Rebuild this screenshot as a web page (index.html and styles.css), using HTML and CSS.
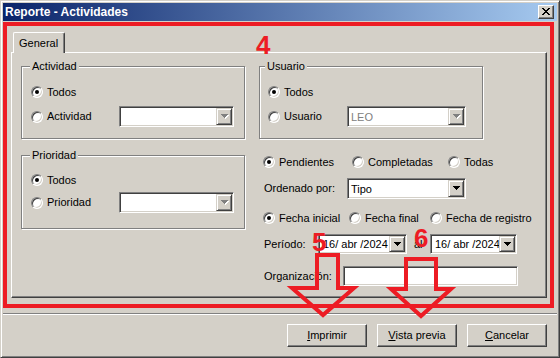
FILE: index.html
```html
<!DOCTYPE html>
<html>
<head>
<meta charset="utf-8">
<title>Reporte - Actividades</title>
<link rel="stylesheet" href="styles.css">
</head>
<body>
<div class="window">
  <div class="titlebar">
    <span class="title">Reporte - Actividades</span>
    <span class="close"><svg width="8" height="7" viewBox="0 0 8 7" shape-rendering="crispEdges"><path d="M0 0h2v1H0z M6 0h2v1H6z M1 1h2v1H1z M5 1h2v1H5z M2 2h4v1H2z M3 3h2v1H3z M2 4h4v1H2z M1 5h2v1H1z M5 5h2v1H5z M0 6h2v1H0z M6 6h2v1H6z" fill="#000"/></svg></span>
  </div>
  <div class="main">
    <div class="tabstrip"><div class="tab">General</div></div>
    <div class="panel">
      <div class="col-left">
        <div class="group">
          <div class="legend">Actividad</div>
          <div class="row r1 pl9"><label class="opt w88"><span class="radio on"></span>Todos</label></div>
          <div class="row r2 pl9"><label class="opt w88"><span class="radio"></span>Actividad</label>
            <div class="combo disabled w115"><span class="val"></span><span class="drop"><svg width="8" height="5" viewBox="0 0 8 5" shape-rendering="crispEdges"><path class="sh" d="M1 1h7v1h-1v1h-1v1h-1v1h-1v-1h-1v-1h-1v-1H1z"/><path class="ar" d="M0 0h7v1h-1v1h-1v1h-1v1h-1v-1h-1v-1h-1v-1H0z"/></svg></span></div>
          </div>
        </div>
        <div class="group g-prio">
          <div class="legend">Prioridad</div>
          <div class="row p1 pl9"><label class="opt w88"><span class="radio on"></span>Todos</label></div>
          <div class="row p2 pl9"><label class="opt w88"><span class="radio"></span>Prioridad</label>
            <div class="combo disabled w115"><span class="val"></span><span class="drop"><svg width="8" height="5" viewBox="0 0 8 5" shape-rendering="crispEdges"><path class="sh" d="M1 1h7v1h-1v1h-1v1h-1v1h-1v-1h-1v-1h-1v-1H1z"/><path class="ar" d="M0 0h7v1h-1v1h-1v1h-1v1h-1v-1h-1v-1h-1v-1H0z"/></svg></span></div>
          </div>
        </div>
      </div>
      <div class="col-right">
        <div class="group g-user">
          <div class="legend lg5">Usuario</div>
          <div class="row r1 pl8"><label class="opt w79"><span class="radio on"></span>Todos</label></div>
          <div class="row r2 pl8"><label class="opt w79"><span class="radio"></span>Usuario</label>
            <div class="combo disabled w119"><span class="val grey">LEO</span><span class="drop"><svg width="8" height="5" viewBox="0 0 8 5" shape-rendering="crispEdges"><path class="sh" d="M1 1h7v1h-1v1h-1v1h-1v1h-1v-1h-1v-1h-1v-1H1z"/><path class="ar" d="M0 0h7v1h-1v1h-1v1h-1v1h-1v-1h-1v-1h-1v-1H0z"/></svg></span></div>
          </div>
        </div>
        <div class="rrow s-status">
          <label class="opt w89"><span class="radio on"></span>Pendientes</label>
          <label class="opt w96"><span class="radio"></span>Completadas</label>
          <label class="opt"><span class="radio"></span>Todas</label>
        </div>
        <div class="rrow s-order">
          <span class="lbl w84">Ordenado por:</span>
          <div class="combo w119"><span class="val">Tipo</span><span class="drop"><svg width="8" height="5" viewBox="0 0 8 5" shape-rendering="crispEdges"><path class="sh" d="M1 1h7v1h-1v1h-1v1h-1v1h-1v-1h-1v-1h-1v-1H1z"/><path class="ar" d="M0 0h7v1h-1v1h-1v1h-1v1h-1v-1h-1v-1h-1v-1H0z"/></svg></span></div>
        </div>
        <div class="rrow s-fecha">
          <label class="opt w86"><span class="radio on"></span>Fecha inicial</label>
          <label class="opt w81"><span class="radio"></span>Fecha final</label>
          <label class="opt"><span class="radio"></span>Fecha de registro</label>
        </div>
        <div class="rrow s-period">
          <span class="lbl w55">Período:</span>
          <div class="combo date w89"><span class="val dv">16/ abr /2024</span><span class="drop"><svg width="8" height="5" viewBox="0 0 8 5" shape-rendering="crispEdges"><path class="sh" d="M1 1h7v1h-1v1h-1v1h-1v1h-1v-1h-1v-1h-1v-1H1z"/><path class="ar" d="M0 0h7v1h-1v1h-1v1h-1v1h-1v-1h-1v-1h-1v-1H0z"/></svg></span></div>
          <span class="lbl al">al</span>
          <div class="combo date w87"><span class="val dv">16/ abr /2024</span><span class="drop"><svg width="8" height="5" viewBox="0 0 8 5" shape-rendering="crispEdges"><path class="sh" d="M1 1h7v1h-1v1h-1v1h-1v1h-1v-1h-1v-1h-1v-1H1z"/><path class="ar" d="M0 0h7v1h-1v1h-1v1h-1v1h-1v-1h-1v-1h-1v-1H0z"/></svg></span></div>
        </div>
        <div class="rrow s-org">
          <span class="lbl w80">Organización:</span>
          <div class="input w175"></div>
        </div>
      </div>
    </div>
  </div>
  <div class="sep"></div>
  <div class="actions">
    <div class="btn"><span><u>I</u>mprimir</span></div>
    <div class="btn"><span><u>V</u>ista previa</span></div>
    <div class="btn"><span><u>C</u>ancelar</span></div>
  </div>
</div>

<div class="annot">
  <div class="redbox"></div>
  <span class="num n4">4</span>
  <span class="num n5">5</span>
  <span class="num n6">6</span>
  <svg class="arrows" width="560" height="358" viewBox="0 0 560 358">
    <path d="M317 255H338V288H354L323 315L292 288H317Z"/>
    <path d="M406 259H436V289H451L421 316L391 289H406Z"/>
  </svg>
</div>
</body>
</html>
```

FILE: styles.css
```css
* { box-sizing: border-box; margin: 0; padding: 0; }
html, body { width: 560px; height: 358px; overflow: hidden; }
body {
  background: #D4D0C8;
  font-family: "Liberation Sans", Arial, sans-serif;
  font-size: 11px;
  color: #000;
  position: relative;
}
.window {
  width: 560px;
  height: 358px;
  border: 1px solid;
  border-color: #D4D0C8 #404040 #404040 #D4D0C8;
  box-shadow: inset 1px 1px #fff, inset -1px -1px #808080;
  padding: 2px;
  display: flex;
  flex-direction: column;
  background: #D4D0C8;
}
.titlebar {
  height: 18px;
  flex: none;
  background: linear-gradient(to right, #0A246A, #A6CAF0);
  display: flex;
  align-items: center;
  justify-content: space-between;
  padding: 0 3px 0 2px;
}
.title {
  color: #fff;
  font-weight: bold;
  font-size: 12px;
  line-height: 14px;
  white-space: nowrap;
}
.close {
  width: 16px;
  height: 14px;
  background: #D4D0C8;
  border: 1px solid;
  border-color: #fff #404040 #404040 #fff;
  box-shadow: inset -1px -1px #808080;
  display: flex;
  align-items: center;
  justify-content: center;
  padding: 0 1px 1px 0;
}
.close svg { display: block; }

.main { padding: 11px 10px 0 8px; flex: none; }
.tabstrip { display: flex; height: 20px; padding-left: 2px; }
.tab {
  position: relative;
  z-index: 1;
  width: 52px;
  height: 21px;
  background: #D4D0C8;
  border-top: 1px solid #fff;
  border-left: 1px solid #fff;
  border-right: 1px solid #404040;
  border-top-left-radius: 2px;
  border-top-right-radius: 2px;
  box-shadow: inset -1px 0 #808080;
  padding: 0 0 0 5px;
  display: flex;
  align-items: center;
  line-height: 13px;
}
.panel {
  height: 246px;
  border: 1px solid;
  border-color: #fff #404040 #404040 #fff;
  box-shadow: inset -1px -1px #808080;
  padding: 13px 0 0 9px;
  display: flex;
  gap: 14px;
}
.col-left { width: 224px; flex: none; display: flex; flex-direction: column; }
.col-right { flex: 1; display: flex; flex-direction: column; }

.group {
  width: 224px;
  height: 73px;
  border: 1px solid #808080;
  box-shadow: inset 1px 1px #fff, 1px 1px #fff;
}
.g-prio { margin-top: 16px; height: 74px; }
.legend {
  width: fit-content;
  height: 13px;
  line-height: 13px;
  margin: -7px 0 0 8px;
  padding: 0 2px;
  background: #D4D0C8;
  white-space: nowrap;
}
.legend.lg5 { margin-left: 5px; }

.row { display: flex; align-items: center; }
.pl9 { padding-left: 9px; }
.pl8 { padding-left: 8px; }
.r1 { height: 20px; margin-top: 9px; }
.r2 { height: 21px; margin-top: 4px; }
.p1 { height: 20px; margin-top: 8px; }
.p2 { height: 21px; margin-top: 2px; }

.opt {
  display: flex;
  align-items: center;
  gap: 4px;
  white-space: nowrap;
  line-height: 13px;
  flex: none;
}
.w79 { width: 79px; }
.w80 { width: 80px; }
.w81 { width: 81px; }
.w84 { width: 84px; }
.w86 { width: 86px; }
.w87 { width: 87px; }
.w88 { width: 88px; }
.w89 { width: 89px; }
.w96 { width: 96px; }
.w115 { width: 115px; }
.w119 { width: 119px; }
.w175 { width: 175px; }
.w55 { width: 55px; }

.radio {
  width: 12px;
  height: 12px;
  flex: none;
  border-radius: 50%;
  background: #fff;
  border: 1px solid;
  border-color: #808080 #fff #fff #808080;
  box-shadow: inset 1px 1px #404040, inset -1px -1px #D4D0C8;
  display: flex;
  align-items: center;
  justify-content: center;
}
.radio.on::after {
  content: "";
  width: 4px;
  height: 4px;
  border-radius: 50%;
  background: #000;
}

.combo {
  flex: none;
  height: 21px;
  display: flex;
  background: #fff;
  border: 1px solid;
  border-color: #808080 #fff #fff #808080;
  box-shadow: inset 1px 1px #404040, inset -1px -1px #D4D0C8;
  padding: 1px;
}
.combo.date { height: 20px; }
.val {
  flex: 1;
  padding-left: 2px;
  display: flex;
  align-items: center;
  white-space: nowrap;
  overflow: hidden;
}
.val.grey { color: #808080; }
.val.dv { padding-left: 3px; }
.drop {
  width: 16px;
  flex: none;
  background: #D4D0C8;
  border: 1px solid;
  border-color: #D4D0C8 #404040 #404040 #D4D0C8;
  box-shadow: inset 1px 1px #fff, inset -1px -1px #808080;
  display: flex;
  align-items: center;
  justify-content: center;
  padding: 0 0 0 1px;
}
.drop svg { display: block; }
.drop .ar { fill: #000; }
.drop .sh { fill: none; }
.disabled .drop .ar { fill: #808080; }
.disabled .drop .sh { fill: #fff; }

.rrow { display: flex; align-items: center; padding-left: 4px; white-space: nowrap; }
.s-status { height: 20px; margin-top: 13px; }
.s-order { height: 21px; margin-top: 6px; }
.s-fecha { height: 20px; margin-top: 9px; }
.s-period { height: 20px; margin-top: 6px; }
.s-org { height: 20px; margin-top: 12px; }
.lbl { flex: none; padding-left: 1px; line-height: 13px; }
.lbl.al { width: 23px; padding-left: 7px; }

.input {
  flex: none;
  height: 20px;
  background: #fff;
  border: 1px solid;
  border-color: #808080 #fff #fff #808080;
  box-shadow: inset 1px 1px #404040, inset -1px -1px #D4D0C8;
}

.sep {
  flex: none;
  height: 2px;
  margin-top: 15px;
  border-top: 1px solid #808080;
  border-bottom: 1px solid #fff;
}
.actions {
  display: flex;
  justify-content: flex-end;
  gap: 10px;
  padding-right: 10px;
  margin-top: 9px;
}
.btn {
  width: 80px;
  height: 23px;
  background: #D4D0C8;
  border: 1px solid;
  border-color: #fff #404040 #404040 #fff;
  box-shadow: inset -1px -1px #808080;
  display: flex;
  align-items: center;
  justify-content: center;
  line-height: 13px;
}

.annot {
  position: absolute;
  left: 0;
  top: 0;
  width: 560px;
  height: 358px;
  pointer-events: none;
}
.redbox {
  position: absolute;
  left: 3px;
  top: 22px;
  width: 551px;
  height: 286px;
  border: 4px solid #ED1C24;
}
.num {
  position: absolute;
  font-family: "Liberation Sans", Arial, sans-serif;
  font-weight: bold;
  font-size: 26px;
  line-height: 26px;
  color: #ED1C24;
}
.n4 { left: 256px; top: 32px; }
.n5 { left: 312px; top: 229px; }
.n6 { left: 414px; top: 225px; }
.arrows { position: absolute; left: 0; top: 0; }
.arrows path {
  fill: none;
  stroke: #ED1C24;
  stroke-width: 4;
  stroke-linejoin: miter;
}
```
